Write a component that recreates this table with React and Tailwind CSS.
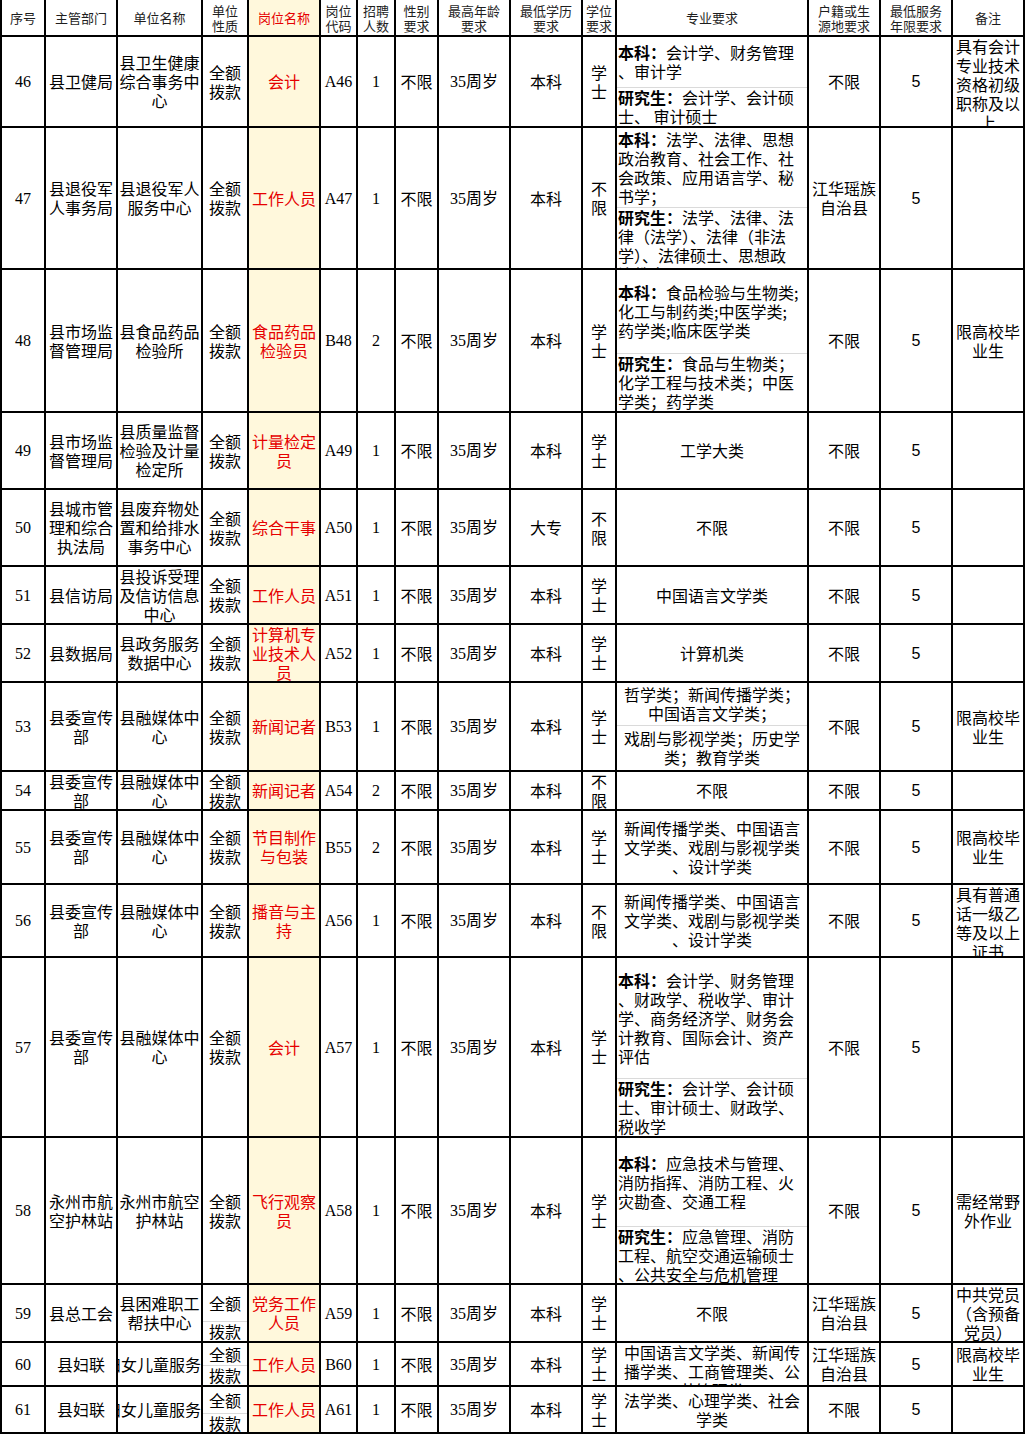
import React from 'react';

const COLS =
  'grid grid-cols-[42px_70px_83px_44px_70px_35px_36px_41px_70px_70px_32px_190px_70px_70px_70px] gap-x-[2px]';
const CJK = "font-['Noto_Sans_CJK_SC',sans-serif]";
const SERIF = "font-['Liberation_Serif','Noto_Sans_CJK_SC',serif]";
const SANS = "font-['Liberation_Sans','Noto_Sans_CJK_SC',sans-serif]";

const rows = [
  {
    h: 'h-[89px]', no: '46', dept: '县卫健局', unit: '县卫生健康/综合事务中/心', post: '会计', code: 'A46', num: '1', deg: '本科', xw: '学/士',
    major: { topH: 'h-[51px]', left: true, top: '本科：会计学、财务管理/、审计学', bottom: '研究生：会计学、会计硕/士、 审计硕士' },
    hj: '不限', note: '具有会计/专业技术/资格初级/职称及以/上',
  },
  {
    h: 'h-[140px]', no: '47', dept: '县退役军/人事务局', unit: '县退役军人/服务中心', post: '工作人员', code: 'A47', num: '1', deg: '本科', xw: '不/限',
    major: {
      topH: 'h-[80px]', left: true,
      top: '本科：法学、法律、思想/政治教育、社会工作、社/会政策、应用语言学、秘/书学；',
      bottom: '研究生：法学、法律、法/律（法学）、法律（非法/学）、法律硕士、思想政/治教育',
    },
    hj: '江华瑶族/自治县', note: '',
  },
  {
    h: 'h-[141px]', no: '48', dept: '县市场监/督管理局', unit: '县食品药品/检验所', post: '食品药品/检验员', code: 'B48', num: '2', deg: '本科', xw: '学/士',
    major: {
      topH: 'h-[84px]', left: true,
      top: '本科：食品检验与生物类;/化工与制药类;中医学类;/药学类;临床医学类',
      bottom: '研究生：食品与生物类；/化学工程与技术类；中医/学类；药学类',
    },
    hj: '不限', note: '限高校毕/业生',
  },
  {
    h: 'h-[75px]', no: '49', dept: '县市场监/督管理局', unit: '县质量监督/检验及计量/检定所', post: '计量检定/员', code: 'A49', num: '1', deg: '本科', xw: '学/士',
    major: '工学大类', hj: '不限', note: '',
  },
  {
    h: 'h-[75px]', no: '50', dept: '县城市管/理和综合/执法局', unit: '县废弃物处/置和给排水/事务中心', post: '综合干事', code: 'A50', num: '1', deg: '大专', xw: '不/限',
    major: '不限', hj: '不限', note: '',
  },
  {
    h: 'h-[56px]', no: '51', dept: '县信访局', unit: '县投诉受理/及信访信息/中心', post: '工作人员', code: 'A51', num: '1', deg: '本科', xw: '学/士',
    major: '中国语言文学类', hj: '不限', note: '',
  },
  {
    h: 'h-[56px]', no: '52', dept: '县数据局', unit: '县政务服务/数据中心', post: '计算机专/业技术人/员', code: 'A52', num: '1', deg: '本科', xw: '学/士',
    major: '计算机类', hj: '不限', note: '',
  },
  {
    h: 'h-[87px]', no: '53', dept: '县委宣传/部', unit: '县融媒体中/心', post: '新闻记者', code: 'B53', num: '1', deg: '本科', xw: '学/士',
    major: { topH: 'h-[43px]', top: '哲学类；新闻传播学类；/中国语言文学类；', bottom: '戏剧与影视学类；历史学/类；教育学类' },
    hj: '不限', note: '限高校毕/业生',
  },
  {
    h: 'h-[37px]', no: '54', dept: '县委宣传/部', unit: '县融媒体中/心', post: '新闻记者', code: 'A54', num: '2', deg: '本科', xw: '不/限',
    major: '不限', hj: '不限', note: '',
  },
  {
    h: 'h-[72px]', no: '55', dept: '县委宣传/部', unit: '县融媒体中/心', post: '节目制作/与包装', code: 'B55', num: '2', deg: '本科', xw: '学/士',
    major: '新闻传播学类、中国语言/文学类、戏剧与影视学类/、设计学类', hj: '不限', note: '限高校毕/业生',
  },
  {
    h: 'h-[71px]', no: '56', dept: '县委宣传/部', unit: '县融媒体中/心', post: '播音与主/持', code: 'A56', num: '1', deg: '本科', xw: '不/限',
    major: '新闻传播学类、中国语言/文学类、戏剧与影视学类/、设计学类', hj: '不限', note: '具有普通/话一级乙/等及以上/证书',
  },
  {
    h: 'h-[178px]', no: '57', dept: '县委宣传/部', unit: '县融媒体中/心', post: '会计', code: 'A57', num: '1', deg: '本科', xw: '学/士',
    major: {
      topH: 'h-[121px]', left: true,
      top: '本科：会计学、财务管理/、财政学、税收学、审计/学、商务经济学、财务会/计教育、国际会计、资产/评估',
      bottom: '研究生：会计学、会计硕/士、审计硕士、财政学、/税收学',
    },
    hj: '不限', note: '',
  },
  {
    h: 'h-[145px]', no: '58', dept: '永州市航/空护林站', unit: '永州市航空/护林站', post: '飞行观察/员', code: 'A58', num: '1', deg: '本科', xw: '学/士',
    major: {
      topH: 'h-[89px]', left: true,
      top: '本科：应急技术与管理、/消防指挥、消防工程、火/灾勘查、交通工程',
      bottom: '研究生：应急管理、消防/工程、航空交通运输硕士/、公共安全与危机管理',
    },
    hj: '不限', note: '需经常野/外作业',
  },
  {
    h: 'h-[56px]', no: '59', dept: '县总工会', unit: '县困难职工/帮扶中心', natureH: 'h-[37px]', post: '党务工作/人员', code: 'A59', num: '1', deg: '本科', xw: '学/士',
    major: '不限', hj: '江华瑶族/自治县', note: '中共党员/（含预备/党员）',
  },
  {
    h: 'h-[42px]', no: '60', dept: '县妇联', unit: '县妇女儿童服务', unitEnd: true, natureH: 'h-[23px]', post: '工作人员', code: 'B60', num: '1', deg: '本科', xw: '学/士',
    major: '中国语言文学类、新闻传/播学类、工商管理类、公/共管理类', hj: '江华瑶族/自治县', note: '限高校毕/业生',
  },
  {
    h: 'h-[45px]', no: '61', dept: '县妇联', unit: '县妇女儿童服务', unitEnd: true, natureH: 'h-[27px]', post: '工作人员', code: 'A61', num: '1', deg: '本科', xw: '学/士',
    major: '法学类、心理学类、社会/学类', hj: '不限', note: '',
  },
];

function Lines({ text }) {
  return text.split('/').map((t, i) => {
    const m = t.match(/^(本科：|研究生：)(.*)$/);
    return (
      <div key={i} className="whitespace-nowrap">
        {m ? (
          <>
            <b className="font-bold">{m[1]}</b>
            {m[2]}
          </>
        ) : (
          t || '\u00a0'
        )}
      </div>
    );
  });
}

function Cell({ text, className = '', justify = 'justify-center', align = 'text-center', bg = 'bg-white', font = '' }) {
  return (
    <div className={`flex [align-items:safe_center] overflow-hidden ${justify} ${bg} ${font} ${className}`}>
      <div className={align}>
        <Lines text={text} />
      </div>
    </div>
  );
}

function Split({ top, bottom, topH, left }) {
  const j = left ? 'justify-start pl-[1px]' : 'justify-center';
  const a = left ? 'text-left' : 'text-center';
  return (
    <div className="flex min-h-0 flex-col overflow-hidden bg-white">
      <Cell text={top} justify={j} align={a} className={`${topH} shrink-0 border-b border-[#dadada]`} />
      <Cell text={bottom} justify={j} align={a} className="min-h-0 flex-1" />
    </div>
  );
}

function Header() {
  const heads = ['序号', '主管部门', '单位名称', '单位/性质', '岗位名称', '岗位/代码', '招聘/人数', '性别/要求', '最高年龄/要求', '最低学历/要求', '学位/要求', '专业要求', '户籍或生/源地要求', '最低服务/年限要求', '备注'];
  return (
    <div className={`${COLS} h-[35px] text-[13px] leading-[15px] text-[#1e1e1e]`}>
      {heads.map((h, i) =>
        i === 4 ? (
          <Cell key={i} text={h} bg="bg-[#fff8dc]" className="text-[#e60000]" />
        ) : (
          <Cell key={i} text={h} />
        )
      )}
    </div>
  );
}

function Row({ r }) {
  return (
    <div className={`${COLS} ${r.h} text-[16px] leading-[19px] text-black`}>
      <Cell text={r.no} font={SERIF} />
      <Cell text={r.dept} />
      <Cell text={r.unit} justify={r.unitEnd ? 'justify-end' : 'justify-center'} />
      {r.natureH ? <Split topH={r.natureH} top="全额" bottom="拨款" /> : <Cell text="全额/拨款" />}
      <Cell text={r.post} bg="bg-[#fff8dc]" className="text-[#e60000]" />
      <Cell text={r.code} font={SERIF} />
      <Cell text={r.num} font={SERIF} />
      <Cell text="不限" />
      <Cell text="35周岁" font={SERIF} />
      <Cell text={r.deg} />
      <Cell text={r.xw} />
      {typeof r.major === 'string' ? <Cell text={r.major} /> : <Split {...r.major} />}
      <Cell text={r.hj} />
      <Cell text="5" font={SANS} />
      <Cell text={r.note} />
    </div>
  );
}

export default function App() {
  return (
    <div className={`flex w-[1025px] flex-col gap-y-[2px] bg-black px-[2px] pb-[2px] ${CJK}`}>
      <Header />
      {rows.map((r) => (
        <Row key={r.no} r={r} />
      ))}
    </div>
  );
}
